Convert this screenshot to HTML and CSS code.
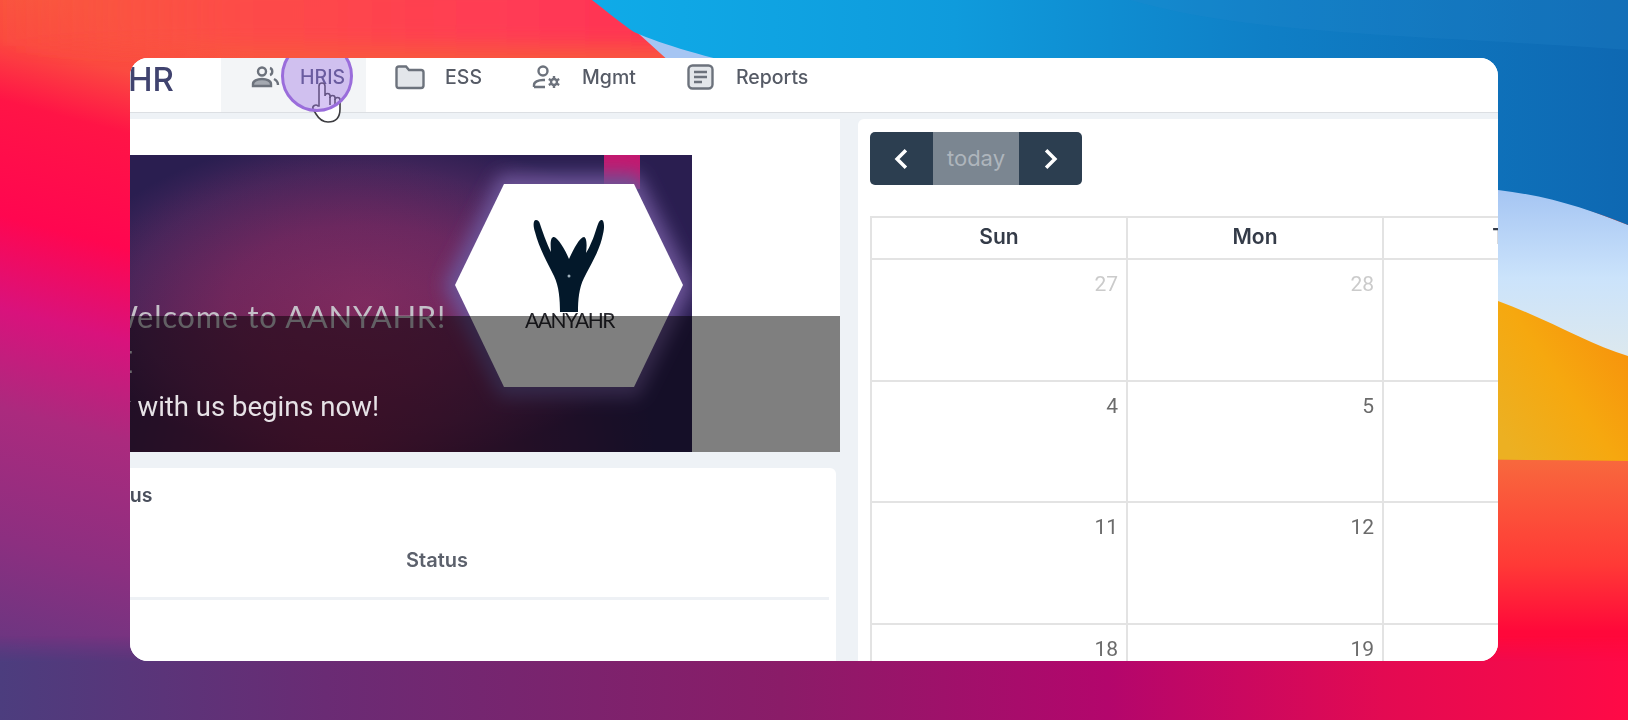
FILE: index.html
```html
<!doctype html>
<html lang="en">
<head>
	<title>AANYAHR - Dashboard</title>
	<link rel="stylesheet" href="styles.css">
</head>
<body>

	<!-- wallpaper -->
	<svg class="wallpaper" viewBox="0 0 1628 720" preserveAspectRatio="none">
		<defs>
			<linearGradient id="wp_left" gradientUnits="userSpaceOnUse" x1="60" y1="0" x2="-130" y2="720">
				<stop offset="0" stop-color="#f9573e"/>
				<stop offset=".07" stop-color="#fb4a40"/>
				<stop offset=".15" stop-color="#ff1446"/>
				<stop offset=".3" stop-color="#ff0650"/>
				<stop offset=".42" stop-color="#d9127c"/>
				<stop offset=".55" stop-color="#ab2a7e"/>
				<stop offset=".72" stop-color="#8c2f80"/>
				<stop offset=".88" stop-color="#663781"/>
				<stop offset="1" stop-color="#4a3d7c"/>
			</linearGradient>
			<linearGradient id="wp_top" x1="0" y1="0" x2="1" y2="0">
				<stop offset="0" stop-color="#fb5240" stop-opacity="0"/>
				<stop offset=".3" stop-color="#fd4c47"/>
				<stop offset=".7" stop-color="#ff3a55"/>
				<stop offset="1" stop-color="#ff2b4f"/>
			</linearGradient>
			<linearGradient id="wp_bottom" x1="0" y1="0" x2="1" y2="0">
				<stop offset="0" stop-color="#4c3d7e"/>
				<stop offset=".2" stop-color="#6a2b74"/>
				<stop offset=".48" stop-color="#8a1c68"/>
				<stop offset=".68" stop-color="#b3066c"/>
				<stop offset=".85" stop-color="#e30a52"/>
				<stop offset="1" stop-color="#ff0a46"/>
			</linearGradient>
			<linearGradient id="wp_fade" gradientUnits="userSpaceOnUse" x1="0" y1="636" x2="0" y2="662">
				<stop offset="0" stop-color="#000"/>
				<stop offset="1" stop-color="#fff"/>
			</linearGradient>
			<mask id="wp_band" maskUnits="userSpaceOnUse" x="0" y="0" width="1628" height="720">
				<rect width="1628" height="720" fill="url(#wp_fade)"/>
			</mask>
			<linearGradient id="wp_blue" x1="0" y1="0" x2="1" y2="0">
				<stop offset="0" stop-color="#0fabe8"/>
				<stop offset=".35" stop-color="#0f9bdc"/>
				<stop offset=".65" stop-color="#0f7fc6"/>
				<stop offset="1" stop-color="#0e68b2"/>
			</linearGradient>
			<linearGradient id="wp_sky" gradientUnits="userSpaceOnUse" x1="0" y1="190" x2="0" y2="350">
				<stop offset="0" stop-color="#a5c5f3"/>
				<stop offset=".55" stop-color="#cbe3fb"/>
				<stop offset="1" stop-color="#dbe8ef"/>
			</linearGradient>
			<linearGradient id="wp_orange" gradientUnits="userSpaceOnUse" x1="1498" y1="430" x2="1628" y2="340">
				<stop offset="0" stop-color="#ecb022"/>
				<stop offset=".5" stop-color="#f6a80f"/>
				<stop offset="1" stop-color="#f7920c"/>
			</linearGradient>
			<linearGradient id="wp_red" gradientUnits="userSpaceOnUse" x1="0" y1="460" x2="0" y2="720">
				<stop offset="0" stop-color="#f8683d"/>
				<stop offset=".4" stop-color="#ff3a36"/>
				<stop offset=".66" stop-color="#ff083a"/>
				<stop offset="1" stop-color="#ff0a46"/>
			</linearGradient>
			<filter id="soft" x="-20%" y="-50%" width="140%" height="200%">
				<feGaussianBlur stdDeviation="10"/>
			</filter>
		</defs>
		<rect width="1628" height="720" fill="url(#wp_left)"/>
		<rect x="0" y="-20" width="760" height="66" fill="url(#wp_top)" filter="url(#soft)"/>
		<path d="M1100 460 L1400 459 L1628 461 V720 H1100 Z" fill="url(#wp_red)"/>
		<rect x="0" y="630" width="1628" height="90" fill="url(#wp_bottom)" mask="url(#wp_band)"/>
		<path d="M600 0 C625 20 645 40 670 62 L1100 300 L1628 400 V225 L1300 100 Z" fill="url(#wp_sky)"/>
		<path d="M1100 230 L1498 301 C1550 320 1590 345 1628 356 V461 L1400 459 L1100 462 Z" fill="url(#wp_orange)"/>
		<path d="M592 0 C610 14 622 24 634 32 C670 48 720 60 800 80 L1300 170 L1498 190 C1550 196 1590 210 1628 225 V0 Z" fill="url(#wp_blue)"/>
		<path d="M1130 0 C1250 35 1420 35 1628 50 V0 Z" fill="#2a88cc" opacity=".22"/>
	</svg>

	<div class="window">
		<div class="screen">

			<!-- top nav -->
			<div class="nav">
				<div class="logo"><span>AANYAHR</span></div>
				<div class="tab tab_active">
					<svg class="nav_icon" viewBox="0 0 30 24">
						<circle cx="12" cy="6.500" r="4"/>
						<path class="icon_body" d="M3 21 v-2 c0-3 4-5 9-5 s9 2 9 5 v2 z"/>
						<path d="M20 3 c3 1 3 6 0 7 M24 14 c2 1 4 3 4 6"/>
					</svg>
					<span>HRIS</span>
				</div>
				<div class="tab">
					<svg class="nav_icon nav_icon_fill" viewBox="0 0 30 24">
						<path d="M1.500 4 q0-2.500 2.500-2.500 h7 l3 3.500 h12 q2.500 0 2.500 2.500 v13 q0 2.500-2.500 2.500 h-22 q-2.500 0-2.500-2.500 z"/>
					</svg>
					<span>ESS</span>
				</div>
				<div class="tab">
					<svg class="nav_icon" viewBox="0 0 30 24">
						<circle cx="11" cy="6" r="4.500"/>
						<path d="M2 22 v-2 c0-3 4-5 9-5 h2 M2 22 h11"/>
						<circle cx="22" cy="17" r="3"/>
						<path d="M22 11 v2.500 M22 20.500 v2.500 M16.800 14 l2.200 1.300 M25 18.700 l2.200 1.300 M16.800 20 l2.200-1.300 M25 15.300 l2.200-1.300"/>
					</svg>
					<span>Mgmt</span>
				</div>
				<div class="tab">
					<svg class="nav_icon nav_icon_fill" viewBox="0 0 30 26">
						<rect x="2.500" y="1.500" width="24" height="23" rx="4"/>
						<path d="M8 8 h13 M8 13 h13 M8 18 h8"/>
					</svg>
					<span>Reports</span>
				</div>

				<!-- click marker and mouse pointer -->
				<svg class="pointer" viewBox="0 0 42 48">
					<path d="M13 28 V8 a3 3 0 0 1 6 0 V18 a2.500 2.500 0 0 1 5 0 v2 a2.500 2.500 0 0 1 5 0 v2 a2.500 2.500 0 0 1 5 0 V31 c0 8-4 13-12 13 c-6 0-9-3-12-8 l-3-5 a3 3 0 0 1 5-3 z"/>
					<path d="M24 19 v8 M29 21 v6"/>
				</svg>
				<div class="click_mark"></div>
			</div>

			<div class="main">
				<div class="left_col">
					<div class="banner_panel">
						<div class="banner">
							<svg class="banner_art" viewBox="130 155 562 297">
								<defs>
									<radialGradient id="bn_bg" gradientUnits="userSpaceOnUse" cx="0" cy="0" r="1" gradientTransform="translate(365 300) scale(300 165)">
										<stop offset="0" stop-color="#76316b"/>
										<stop offset=".45" stop-color="#652a64"/>
										<stop offset=".78" stop-color="#45265c"/>
										<stop offset="1" stop-color="#2a1e50"/>
									</radialGradient>
									<radialGradient id="bn_low" gradientUnits="userSpaceOnUse" cx="330" cy="480" r="330">
										<stop offset="0" stop-color="#8c1e46" stop-opacity=".75"/>
										<stop offset="1" stop-color="#8c1e46" stop-opacity="0"/>
									</radialGradient>
									<filter id="glow" x="-20%" y="-20%" width="140%" height="140%">
										<feGaussianBlur stdDeviation="9"/>
									</filter>
								</defs>
								<rect x="130" y="155" width="562" height="297" fill="#2a1e50"/>
								<rect x="130" y="155" width="562" height="297" fill="url(#bn_bg)"/>
								<rect x="130" y="155" width="562" height="297" fill="url(#bn_low)"/>
								<rect x="604" y="155" width="36" height="34" fill="#c3186f"/>
								<polygon points="500,174 638,174 694,285 638,397 500,397 444,285" fill="#6b5296" filter="url(#glow)"/>
								<polygon points="504,184 634,184 683,285 634,387 504,387 455,285" fill="#fff"/>
								<path d="M536 220 C533 220 533 226 535 232 C539 248 548 264 554 276 C559 286 560 300 560 312 L578 312 C578 300 579 288 584 278 C591 264 600 250 603 234 C605 226 604 219 601 220 C598 221 597 228 594 236 C591 244 588 250 586 253 C587 246 587 238 584 237 C580 237 574 248 569 259 C565 249 558 238 554 237 C551 237 550 241 551 252 C546 242 542 230 540 224 C539 221 538 220 536 220 Z" fill="#03182a"/>
								<circle cx="569" cy="276" r="1.500" fill="#9fb0bd"/>
							</svg>
							<span class="logo_word">AANYAHR</span>
							<span class="welcome">Welcome to AANYAHR!</span>
							<span class="welcome_sub">EMPLOYEE</span>
							<div class="banner_shade"></div>
							<span class="journey">Your journey with us begins now!</span>
						</div>
					</div>

					<div class="card">
						<div class="card_title">Status</div>
						<div class="card_head"><div class="status_head">Status</div></div>
					</div>
				</div>

				<div class="right_col">
					<div class="cal_btns">
						<div class="cal_btn">
							<svg viewBox="0 0 14 20"><path d="M11 2 L3 10 L11 18"/></svg>
						</div>
						<div class="cal_btn cal_today">today</div>
						<div class="cal_btn">
							<svg viewBox="0 0 14 20"><path d="M3 2 L11 10 L3 18"/></svg>
						</div>
					</div>

					<div class="cal_grid">
						<div class="cal_head">Sun</div>
						<div class="cal_head">Mon</div>
						<div class="cal_head">Tue</div>

						<div class="cal_day cal_other">27</div>
						<div class="cal_day cal_other">28</div>
						<div class="cal_day cal_other">29</div>

						<div class="cal_day">4</div>
						<div class="cal_day">5</div>
						<div class="cal_day">6</div>

						<div class="cal_day">11</div>
						<div class="cal_day">12</div>
						<div class="cal_day">13</div>

						<div class="cal_day">18</div>
						<div class="cal_day">19</div>
						<div class="cal_day">20</div>
					</div>
				</div>
			</div>

		</div>
	</div>

</body>
</html>
```

FILE: styles.css
```css
html, body{
	margin: 0;
	height: 100%;
	overflow: hidden;
}

body{
	padding: 58px 130px 0 130px;
	box-sizing: border-box;
	font-family: "Inter", "Liberation Sans", sans-serif;
}

.wallpaper{
	position: fixed;
	top: 0;
	left: 0;
	width: 100%;
	height: 100%;
	z-index: -1;
}

.window{
	width: 1368px;
	height: 603px;
	border-radius: 18px;
	overflow: hidden;
	background-color: white;
}

.screen{
	height: 100%;
	filter: blur(0.7px);
}

/* nav */
.nav{
	position: relative;
	z-index: 2;
	display: flex;
	height: 54px;
	background-color: white;
	border-bottom: 1px solid #dcdfe3;
}

.logo{
	display: flex;
	justify-content: flex-end;
	width: 91px;
	flex-shrink: 0;
	overflow: hidden;
}

.logo span{
	margin-right: 47px;
	font-size: 33px;
	font-weight: 500;
	line-height: 42px;
	color: #40436f;
	white-space: nowrap;
}

.tab{
	display: flex;
	align-items: center;
	gap: 20px;
	padding: 0 21px 16px 29px;
	font-size: 19.500px;
	font-weight: 500;
	color: #565b66;
}

.tab_active{
	background-color: #f3f5f7;
	color: #44496e;
}

.nav_icon{
	width: 30px;
	height: 24px;
	fill: none;
	stroke: #6c727c;
	stroke-width: 2.4;
}

.icon_body{
	fill: #a4a9b1;
}

.nav_icon_fill{
	height: 26px;
	fill: #e3e6ea;
}

.pointer{
	position: absolute;
	left: 176px;
	top: 20px;
	width: 42px;
	height: 48px;
	fill: white;
	stroke: #3c3c40;
	stroke-width: 1.6;
}

.click_mark{
	position: absolute;
	left: 151px;
	top: -18px;
	width: 72px;
	height: 72px;
	box-sizing: border-box;
	border: 3px solid #9a6ddb;
	border-radius: 50%;
	background-color: rgba(160, 120, 228, 0.42);
}

/* content */
.main{
	display: flex;
	gap: 18px;
	height: 548px;
	padding-top: 6px;
	box-sizing: border-box;
	background-color: #eef2f6;
}

.left_col{
	width: 710px;
	flex-shrink: 0;
}

.banner_panel{
	padding-top: 36px;
	background-color: white;
}

.banner{
	position: relative;
	height: 297px;
	overflow: hidden;
}

.banner_art{
	display: block;
	width: 562px;
	height: 297px;
}

.banner_shade{
	position: absolute;
	left: 0;
	right: 0;
	top: 161px;
	bottom: 0;
	background-color: rgba(0, 0, 0, 0.5);
}

.logo_word{
	position: absolute;
	left: 395px;
	top: 153px;
	font-family: "Lato", sans-serif;
	font-size: 21px;
	line-height: 24px;
	letter-spacing: -1.500px;
	color: #2a2a30;
}

.welcome{
	position: absolute;
	right: 394px;
	top: 143px;
	font-family: "Lato", sans-serif;
	font-size: 31px;
	line-height: 36px;
	letter-spacing: 0.700px;
	color: #c4c0c8;
	white-space: nowrap;
}

.welcome_sub{
	position: absolute;
	right: 707px;
	top: 188px;
	font-family: "Lato", sans-serif;
	font-size: 30px;
	line-height: 36px;
	color: #d8d4da;
	white-space: nowrap;
}

.journey{
	position: absolute;
	right: 461px;
	top: 236px;
	font-family: "Roboto", sans-serif;
	font-size: 27.500px;
	line-height: 32px;
	color: #e6e2e6;
	white-space: nowrap;
}

.card{
	height: 200px;
	width: 706px;
	margin-top: 16px;
	box-sizing: border-box;
	background-color: white;
	border-radius: 0 6px 0 0;
	padding-top: 16px;
}

.card_title{
	margin-left: -38px;
	font-size: 19.500px;
	font-weight: 600;
	line-height: 22px;
	color: #4a4f5c;
}

.card_head{
	height: 94px;
	margin-right: 7px;
	border-bottom: 3px solid #eef1f5;
	box-sizing: border-box;
}

.status_head{
	width: 614px;
	padding-top: 43px;
	text-align: center;
	font-size: 20px;
	font-weight: 600;
	line-height: 22px;
	color: #5c616c;
}

/* calendar */
.right_col{
	flex: 1;
	min-width: 0;
	padding: 13px 0 0 12px;
	background-color: white;
	border-radius: 6px 0 0 0;
	overflow: hidden;
}

.cal_btns{
	display: flex;
	width: 212px;
	height: 53px;
	border-radius: 5px;
	overflow: hidden;
}

.cal_btn{
	display: flex;
	align-items: center;
	justify-content: center;
	width: 63px;
	background-color: #2c3e50;
}

.cal_btn svg{
	width: 17px;
	height: 22px;
	fill: none;
	stroke: white;
	stroke-width: 3.2;
}

.cal_today{
	width: 86px;
	padding-bottom: 2px;
	box-sizing: border-box;
	background-color: #7b8691;
	font-size: 22px;
	color: #aeb5bc;
}

.cal_grid{
	display: grid;
	grid-template-columns: repeat(3, 256px);
	grid-template-rows: 42px repeat(4, 121.500px);
	margin-top: 31px;
	border-top: 2px solid #e3e3e3;
	border-left: 2px solid #e3e3e3;
}

.cal_head{
	border-right: 2px solid #e3e3e3;
	border-bottom: 2px solid #e3e3e3;
	text-align: center;
	font-size: 21px;
	font-weight: 600;
	line-height: 38px;
	color: #343b48;
}

.cal_day{
	padding: 12px 8px 0 0;
	border-right: 2px solid #e3e3e3;
	border-bottom: 2px solid #e3e3e3;
	text-align: right;
	font-family: "Roboto", sans-serif;
	font-size: 21px;
	line-height: 24px;
	color: #6b6b6b;
}

.cal_other{
	color: #cbcbcb;
}
```
